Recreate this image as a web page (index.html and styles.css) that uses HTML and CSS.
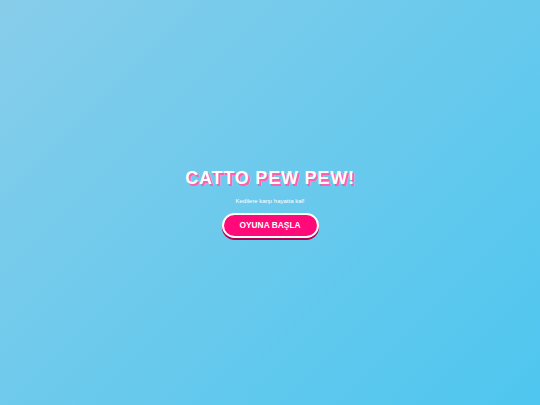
FILE: index.html
```html
<!DOCTYPE html>
<html>
  <head>
    <title>Catto Pew Pew</title>
    <meta name="viewport" content="width=device-width, initial-scale=1.0">
    <link rel="stylesheet" href="styles.css">
  </head>
  <body>
    <section class="menu">
      <h1 class="title">CATTO PEW PEW!</h1>
      <p class="subtitle">Kedilere karşı hayatta kal!</p>
      <a href="#" class="start">OYUNA BAŞLA</a>
    </section>
  </body>
</html>
```

FILE: styles.css
```css
*{
  margin:0;
  padding:0;
  box-sizing:border-box;
}
html,body{
  width:100%;
  height:100%;
}
body{
  font-family:"Liberation Sans", Arial, sans-serif;
  background:linear-gradient(135deg, #87cdea 0%, #4ec6ef 100%);
  display:flex;
  align-items:center;
  justify-content:center;
}
.menu{
  display:flex;
  flex-direction:column;
  align-items:center;
}
.title{
  color:#fff;
  font-size:18px;
  font-weight:bold;
  letter-spacing:0.8px;
  text-shadow:2px 2px 0 #ff5fb0;
}
.subtitle{
  color:#fff;
  font-size:6px;
  margin-top:9px;
}
.start{
  display:block;
  margin-top:9px;
  width:97px;
  height:25px;
  line-height:21px;
  text-align:center;
  background:#ff0a78;
  color:#fff;
  font-size:8.4px;
  font-weight:bold;
  text-decoration:none;
  border:2px solid #fff;
  border-radius:13px;
  box-shadow:0 2px 0 #b0004f;
}
```
